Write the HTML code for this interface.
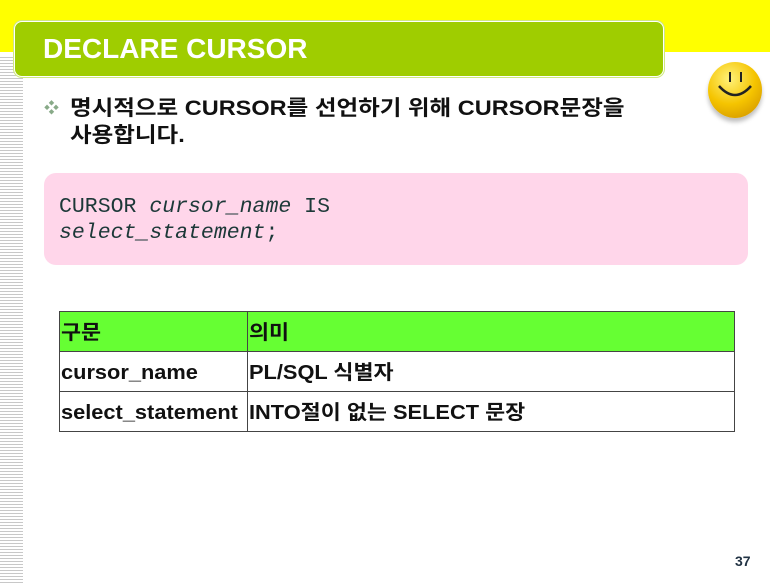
<!DOCTYPE html>
<html><head><meta charset="utf-8"><style>
body{margin:0;width:770px;height:584px;background:#fff;position:relative;overflow:hidden;font-family:"Liberation Sans","Noto Sans CJK KR",sans-serif;}
.yel{position:absolute;left:0;top:0;width:770px;height:52px;background:#ffff00;}
.stripes{position:absolute;left:0;top:55px;width:23px;height:529px;background:repeating-linear-gradient(#fff 0 2px,#c8c8c8 2px 3px);}
.title{position:absolute;left:14px;top:21px;width:648px;height:54px;background:#9fcd00;border-radius:8px;border:1px solid #fff;box-shadow:0 0 0 1px #cfe880;}
.title span{position:absolute;left:28px;top:11px;color:#fff;font-weight:bold;font-size:28px;}
.bul{position:absolute;left:44px;top:95px;font-size:21px;font-weight:bold;line-height:27px;color:#111;}
.bul i{position:absolute;left:0;top:0;font-style:normal;color:#8a8;font-size:15px;}
.bul div{position:absolute;left:26px;top:0;transform:scaleX(1.12);transform-origin:left;white-space:nowrap;}
.code{position:absolute;left:44px;top:173px;width:704px;height:92px;background:#ffd6ea;border-radius:12px;}
.code pre{margin:0;position:absolute;left:15px;top:21px;font-family:"Liberation Mono",monospace;font-size:21.5px;line-height:26px;color:#1c3838;}
table{position:absolute;left:59px;top:311px;width:676px;border-collapse:collapse;font-weight:bold;font-size:20px;}
td{border:1px solid #444;height:39px;padding:0 1px;color:#111;vertical-align:top;line-height:24px;}
td span{display:block;height:24px;line-height:24px;transform:scaleX(1.09);transform-origin:left;white-space:nowrap;padding-top:9px;}
tr.h td{background:#66ff33;}
.smile{position:absolute;left:708px;top:62px;width:54px;height:56px;border-radius:50%;background:radial-gradient(circle at 40% 30%,#fff27a,#f5c400 50%,#c98a00);box-shadow:0 4px 4px rgba(0,0,0,.25);}
.num{position:absolute;left:735px;top:553px;font-size:14px;color:#234;font-weight:bold;}
</style></head><body>
<div class="yel"></div>
<div class="stripes"></div>
<div class="title"><span>DECLARE CURSOR</span></div>
<div class="smile"><svg width="54" height="56"><line x1="22" y1="10" x2="22" y2="20" stroke="#222" stroke-width="2"/><line x1="33" y1="10" x2="33" y2="20" stroke="#222" stroke-width="2"/><path d="M11 24 Q27 42 43 24" stroke="#222" stroke-width="2.5" fill="none"/></svg></div>
<div class="bul"><i>❖</i><div>명시적으로 CURSOR를 선언하기 위해 CURSOR문장을<br>사용합니다.</div></div>
<div class="code"><pre>CURSOR <i>cursor_name</i> IS
<i>select_statement</i>;</pre></div>
<table>
<tr class="h"><td style="width:185px"><span>구문</span></td><td><span>의미</span></td></tr>
<tr><td><span>cursor_name</span></td><td><span>PL/SQL 식별자</span></td></tr>
<tr><td><span>select_statement</span></td><td><span>INTO절이 없는 SELECT 문장</span></td></tr>
</table>
<div class="num">37</div>
</body></html>
